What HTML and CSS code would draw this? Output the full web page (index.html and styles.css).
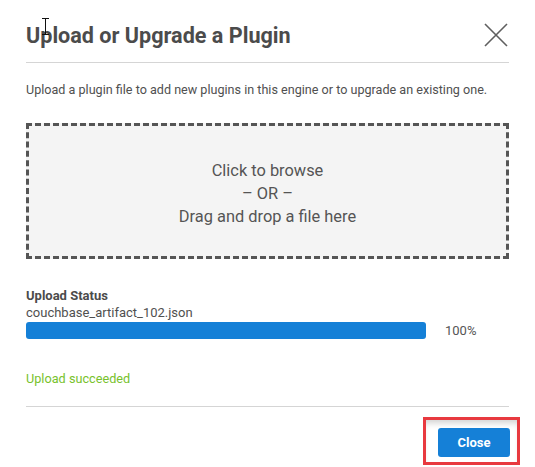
FILE: index.html
```html
<!DOCTYPE html>
<html>
<head>
<meta charset="utf-8">
<link rel="stylesheet" href="styles.css">
</head>
<body>
<div class="dialog">
  <div class="header">
    <h1 class="title">Upload or Upgrade a Plugin</h1>
    <button class="close-x" aria-label="Close">
      <svg width="24" height="24" viewBox="0 0 24 24"><path d="M1 1 L23 23 M23 1 L1 23" stroke="#5f5f5f" stroke-width="1.6" fill="none"/></svg>
    </button>
  </div>
  <p class="desc">Upload a plugin file to add new plugins in this engine or to upgrade an existing one.</p>
  <div class="dropzone">
    <div>Click to browse</div>
    <div>– OR –</div>
    <div>Drag and drop a file here</div>
  </div>
  <div class="status">
    <div class="status-label">Upload Status</div>
    <div class="file-name">couchbase_artifact_102.json</div>
    <div class="progress-row">
      <div class="bar"><div class="fill" style="width:100%"></div></div>
      <span class="pct">100%</span>
    </div>
    <div class="success">Upload succeeded</div>
  </div>
  <div class="footer">
    <button class="btn-close">Close</button>
    <div class="highlight"></div>
  </div>
  <svg class="cursor" width="9" height="17" viewBox="0 0 9 17"><path d="M1 0.5 H8 M4.5 0.5 V16.5 M1 16.5 H8" stroke="#111" stroke-width="1" fill="none"/></svg>
</div>
</body>
</html>
```
FILE: styles.css
```css
* { box-sizing: border-box; }
html, body { margin: 0; padding: 0; background: #fff; }
body {
  font-family: Roboto, "Noto Sans", Arial, sans-serif;
  color: #555;
  width: 535px;
  height: 467px;
  overflow: hidden;
}
.dialog {
  position: relative;
  padding: 0 26px;
}
.header {
  display: flex;
  justify-content: space-between;
  align-items: flex-start;
  padding: 22px 0 12px;
  border-bottom: 1px solid #d5d5d5;
}
.title {
  margin: 0;
  font-size: 21.6px;
  line-height: 28px;
  font-weight: 700;
  color: #4b4b4b;
}
.close-x {
  margin: 1px 1px 0 0;
  padding: 0;
  border: 0;
  background: none;
  width: 24px;
  height: 24px;
  display: flex;
}
.desc {
  margin: 18px 0 0;
  font-size: 12.6px;
  line-height: 18px;
  color: #505050;
}
.dropzone {
  margin-top: 24px;
  height: 136px;
  border: 3px dashed #555;
  background: #f4f4f4;
  display: flex;
  flex-direction: column;
  justify-content: center;
  align-items: center;
  font-size: 16.4px;
  line-height: 23px;
  color: #555;
  padding-top: 4px;
}
.status {
  margin-top: 28px;
}
.status-label {
  font-size: 13px;
  line-height: 17px;
  font-weight: 700;
  color: #4b4b4b;
}
.file-name {
  font-size: 13px;
  line-height: 18px;
  color: #505050;
}
.progress-row {
  display: flex;
  align-items: center;
}
.bar {
  width: 400px;
  height: 17px;
  border-radius: 3px;
  background: #e6e6e6;
  overflow: hidden;
}
.fill {
  height: 100%;
  background: #1580d7;
}
.pct {
  margin-left: 19px;
  font-size: 13px;
  color: #555;
}
.success {
  margin-top: 31px;
  font-size: 12.7px;
  line-height: 17px;
  color: #78c22d;
}
.footer {
  position: relative;
  margin-top: 19px;
  border-top: 1px solid #d5d5d5;
  display: flex;
  justify-content: flex-end;
  padding-top: 21px;
}
.btn-close {
  width: 72px;
  height: 29px;
  margin-right: -1px;
  border: 0;
  border-radius: 3px;
  background: #1580d7;
  color: #fff;
  font-family: Roboto, Arial, sans-serif;
  font-size: 13px;
  font-weight: 700;
}
.highlight {
  position: absolute;
  right: -11px;
  top: 10px;
  width: 97px;
  height: 48px;
  border: 3px solid #e8393f;
  box-shadow: inset 0 6px 6px -3px rgba(0,0,0,0.18);
  pointer-events: none;
}
.cursor {
  position: absolute;
  left: 41px;
  top: 18px;
}
```
